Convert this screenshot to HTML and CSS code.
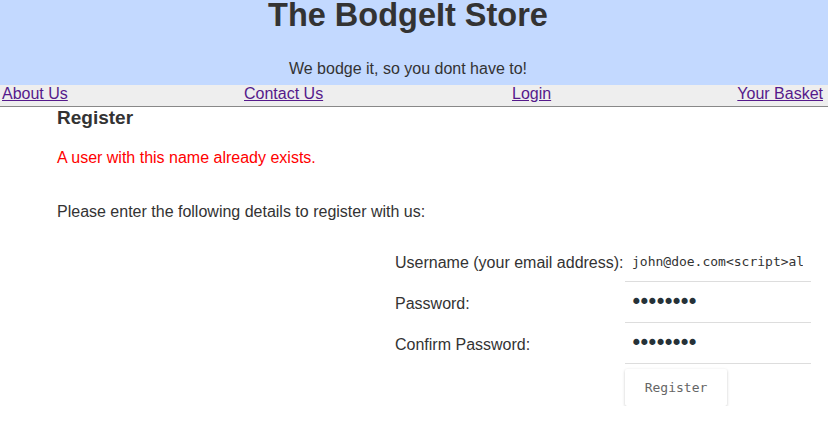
FILE: index.html
```html
<!DOCTYPE html>
<html>
<head>
<meta charset="utf-8">
<title>The BodgeIt Store</title>
<link rel="stylesheet" href="styles.css">
</head>
<body>
<header class="banner">
  <h1 class="title">The BodgeIt Store</h1>
  <div class="tagline">We bodge it, so you dont have to!</div>
</header>
<nav class="nav">
  <a href="#" class="nav-link">About Us</a>
  <a href="#" class="nav-link">Contact Us</a>
  <a href="#" class="nav-link">Login</a>
  <a href="#" class="nav-link nav-right">Your Basket</a>
</nav>
<main class="content">
  <h3 class="page-title">Register</h3>
  <p class="error">A user with this name already exists.</p>
  <p class="intro">Please enter the following details to register with us:</p>
  <form class="form">
    <label class="label">Username (your email address):</label>
    <input class="field" type="text" value="john@doe.com&lt;script&gt;alert(1)&lt;/script&gt;">
    <label class="label">Password:</label>
    <input class="field field-pass" type="password" value="password">
    <label class="label">Confirm Password:</label>
    <input class="field field-pass" type="password" value="password">
    <span></span>
    <div class="actions"><button type="button" class="btn">Register</button></div>
  </form>
</main>
</body>
</html>
```
FILE: styles.css
```css
html, body {
  margin: 0;
  padding: 0;
  background: #fff;
}
body {
  font-family: "Liberation Sans", Arial, sans-serif;
  font-size: 16px;
  color: #333;
}
.banner {
  display: flow-root;
  background: #c3d9ff;
  height: 85px;
  padding-right: 12px;
  text-align: center;
}
.title {
  margin: -1px 0 0 0;
  font-size: 32.5px;
  line-height: 33px;
  font-weight: bold;
}
.tagline {
  margin-top: 28px;
  line-height: 18px;
}
.nav {
  background: #eee;
  display: grid;
  grid-template-columns: 242px 268px 1fr auto;
  padding: 0 5px 3px 2px;
  line-height: 18px;
  border-bottom: 1px solid #888;
}
.nav-link {
  color: #551a8b;
  text-decoration: underline;
  justify-self: start;
}
.nav-right {
  justify-self: end;
}
.content {
  padding: 0 17px 0 57px;
}
.page-title {
  margin: 0;
  font-size: 19px;
  line-height: 22px;
  font-weight: bold;
}
.error {
  color: #f00;
  margin: 20px 0 0 0;
  line-height: 18px;
}
.intro {
  margin: 36px 0 0 0;
  line-height: 18px;
}
.form {
  margin-top: 20px;
  display: grid;
  grid-template-columns: 230px 186px;
  justify-content: end;
  align-items: center;
}
.label {
  line-height: 18px;
  padding-top: 3px;
}
.field {
  box-sizing: border-box;
  width: 186px;
  height: 41px;
  border: none;
  border-bottom: 1px solid #ddd;
  outline: none;
  padding: 0 8px 0 7px;
  margin: 0;
  font-family: "DejaVu Sans Mono", "Liberation Mono", monospace;
  font-size: 13px;
  color: #333;
  background: #fff;
}
.field-pass {
  font-size: 21px;
  letter-spacing: -4.6px;
  color: #263238;
  padding-left: 5px;
}
.actions {
  padding-top: 5px;
}
.btn {
  width: 102px;
  height: 37px;
  border: none;
  border-radius: 2px;
  background: #fff;
  box-shadow: 0 1px 3px rgba(0, 0, 0, 0.22);
  font-family: "DejaVu Sans Mono", "Liberation Mono", monospace;
  font-size: 13px;
  color: #666;
  padding: 0;
}
```
